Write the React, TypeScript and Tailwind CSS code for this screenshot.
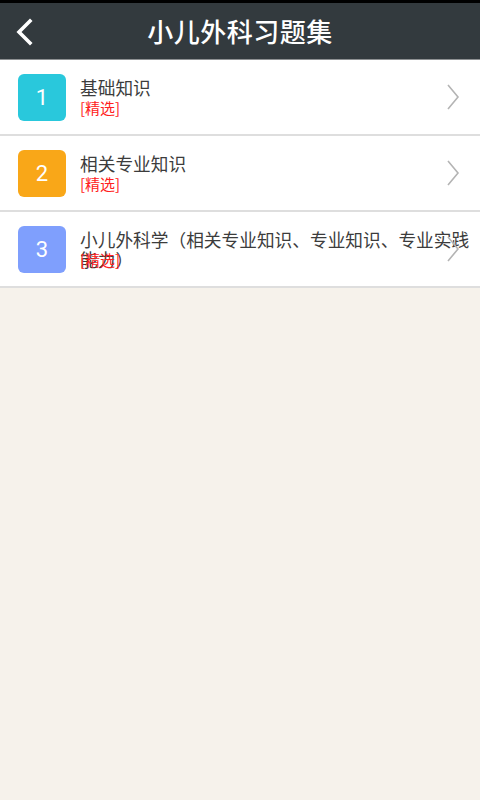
import React from "react";

const items = [
  { n: "1", color: "bg-[#29c8dc]", title: "基础知识" },
  { n: "2", color: "bg-[#f9a718]", title: "相关专业知识" },
  { n: "3", color: "bg-[#7f9ffd]", title: "小儿外科学（相关专业知识、专业知识、专业实践能力）" },
];

function Chevron() {
  return (
    <svg width="14" height="26" viewBox="0 0 14 26" className="shrink-0">
      <path d="M2 1 L12 13 L2 25" fill="none" stroke="#b4b4b4" strokeWidth="1.6" />
    </svg>
  );
}

export default function App() {
  return (
    <div
      className="w-[480px] h-[800px] flex flex-col bg-[#f6f2eb]"
      style={{ fontFamily: '"Noto Sans CJK SC", "Noto Sans", Roboto, sans-serif' }}
    >
      <div className="h-[3px] bg-black" />
      <div className="h-[56px] bg-[#333a3e] relative flex items-center justify-center">
        <div className="absolute left-[14px] top-[15px]">
          <svg width="20" height="28" viewBox="0 0 20 28">
            <path d="M16 3 L5 14 L16 25" fill="none" stroke="#ffffff" strokeWidth="3.6" strokeLinecap="square" />
          </svg>
        </div>
        <div className="text-white text-[26px] leading-none font-medium tracking-[0.5px]">小儿外科习题集</div>
      </div>
      <div className="h-[1px] bg-[#8e9193]" />
      <div className="flex flex-col bg-white">
        {items.map((it) => (
          <div key={it.n} className="h-[76px] border-b-2 border-[#dedede] flex items-center relative">
            <div
              className={`ml-[18px] w-[48px] h-[47px] rounded-[6px] ${it.color} flex items-center justify-center text-white text-[22px]`}
              style={{ fontFamily: "Roboto, sans-serif" }}
            >
              {it.n}
            </div>
            <div className="ml-[14px] flex-1 flex flex-col mt-[-1px]">
              <div className="h-[20px] text-[17.7px] leading-[20px] text-[#3c3c3c] overflow-visible pr-[8px]">{it.title}</div>
              <div className="text-[15px] leading-[18px] text-[#ff2020] mt-[2px]">[精选]</div>
            </div>
            <div className="absolute right-[20px] top-[24px]">
              <Chevron />
            </div>
          </div>
        ))}
      </div>
    </div>
  );
}
